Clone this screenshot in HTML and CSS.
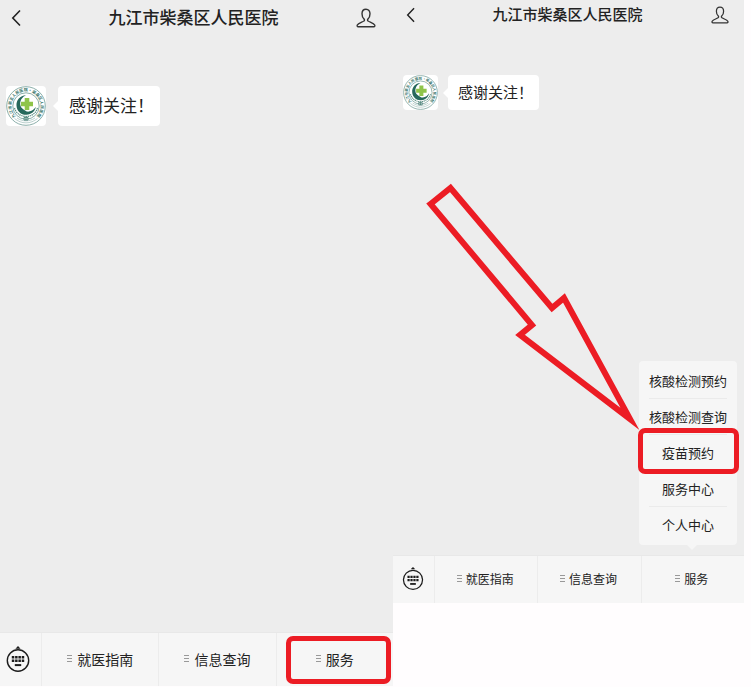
FILE: index.html
```html
<!DOCTYPE html>
<html lang="zh-CN">
<head>
    <meta charset="UTF-8">
    <meta name="viewport" content="width=device-width, initial-scale=1.0">
    <title>九江市柴桑区人民医院</title>
    <link rel="stylesheet" href="styles.css">
</head>
<body>
    <!-- Общие иконки -->
    <svg class="sprite" aria-hidden="true">
        <symbol id="icon-back" viewBox="0 0 10 18">
            <path d="M9 1.5 1.8 9 9 16.5" fill="none" stroke="#222" stroke-width="1.6"/>
        </symbol>
        <symbol id="icon-user" viewBox="0 0 20 20">
            <path d="M10 1.2C7.5 1.2 6 3.1 6 5.7c0 2.2.7 4.2 2.1 5.4.5.5.5 1.3 0 1.8-.9 1-6 2.2-6.8 4.1-.4.9-.1 1.7.9 1.7h15.6c1 0 1.3-.8.9-1.7-.8-1.9-5.9-3.1-6.8-4.1-.5-.5-.5-1.3 0-1.8C13.3 9.9 14 7.9 14 5.7c0-2.6-1.5-4.5-4-4.5z" fill="none" stroke="#333" stroke-width="1.4"/>
        </symbol>
        <symbol id="icon-keyboard" viewBox="0 0 24 28">
            <circle cx="12" cy="15.500" r="10.700" fill="none" stroke="#1c1c1c" stroke-width="1.4"/>
            <path d="M12 1.100 14.600 3.700H9.400z" fill="#1c1c1c"/>
            <path d="M5.800 12.300h12.500M5.800 15.700h12.500" stroke="#1c1c1c" stroke-width="2.500" stroke-dasharray="2.500 .8"/>
            <path d="M8.800 20.100h6.400" stroke="#1c1c1c" stroke-width="2"/>
        </symbol>
        <symbol id="icon-list" viewBox="0 0 5 7">
            <path d="M0 .5h5M0 3.500h5M0 6.500h5" stroke="#999" stroke-width="1"/>
        </symbol>
        <symbol id="logo" viewBox="0 0 40 40">
            <circle cx="20" cy="20" r="19.300" fill="#fff" stroke="#6f9a94" stroke-width=".8"/>
            <path id="ring" d="M9.700 30.300A14.600 14.600 0 1 1 30.300 30.300" fill="none"/>
            <text class="logo_text"><textPath href="#ring">九江市第五人民医院·柴桑区人民医院</textPath></text>
            <circle cx="20" cy="20" r="13.200" fill="none" stroke="#6f9a94" stroke-width=".8"/>
            <path d="M8.500 32.500c7 5.800 16 5.800 23 0M11 32c5.500 3.800 12.500 3.800 18 0" fill="none" stroke="#9dbcb7" stroke-width=".7"/>
            <path d="M20 9.200c-6 .3-9.900 4.800-9.500 10.500.4 5.500 4.600 9.300 10 9.100 4.800-.2 8.600-3.300 9.300-8-1.500 2.700-4 4.500-7 4.800-2.200.2-3-.8-4.600-1.700-2.200-1.300-3.700-2.400-4-5.300-.4-4 2-7.700 5.800-9.400z" fill="#27685c"/>
            <path d="M8.500 22c1.500 5 5.500 8.300 11.500 8.500 6-.2 10-3.500 11.500-8.500" fill="none" stroke="#5d9186" stroke-width="1.200" stroke-dasharray="1.500 .6"/>
            <path d="M18.700 12h4.600v3.700H27v4.600h-3.700V24h-4.600v-3.700H15v-4.600h3.700z" fill="#8fc44a"/>
            <path d="M18 31.500h4v2.600h-4zM20 31.500v2.600" fill="none" stroke="#27685c" stroke-width=".7"/>
        </symbol>
    </svg>

    <main class="phones">
        <section class="phone phone_large">
            <header class="header">
                <button class="icon_button" aria-label="返回"><svg class="back"><use href="#icon-back"/></svg></button>
                <h1 class="title">九江市柴桑区人民医院</h1>
                <button class="icon_button" aria-label="资料"><svg class="user"><use href="#icon-user"/></svg></button>
            </header>
            <div class="chat">
                <svg class="avatar" aria-hidden="true"><use href="#logo"/></svg>
                <p class="bubble">感谢关注！</p>
            </div>
            <nav class="toolbar">
                <button class="keyboard" aria-label="键盘"><svg class="keyboard_icon"><use href="#icon-keyboard"/></svg></button>
                <div class="tab"><button class="tab_button"><svg class="list"><use href="#icon-list"/></svg>就医指南</button></div>
                <div class="tab"><button class="tab_button"><svg class="list"><use href="#icon-list"/></svg>信息查询</button></div>
                <div class="tab marked"><button class="tab_button"><svg class="list"><use href="#icon-list"/></svg>服务</button></div>
            </nav>
        </section>

        <section class="phone phone_small">
            <header class="header">
                <button class="icon_button" aria-label="返回"><svg class="back"><use href="#icon-back"/></svg></button>
                <h1 class="title">九江市柴桑区人民医院</h1>
                <button class="icon_button" aria-label="资料"><svg class="user"><use href="#icon-user"/></svg></button>
            </header>
            <div class="chat">
                <svg class="avatar" aria-hidden="true"><use href="#logo"/></svg>
                <p class="bubble">感谢关注！</p>
            </div>
            <nav class="toolbar">
                <button class="keyboard" aria-label="键盘"><svg class="keyboard_icon"><use href="#icon-keyboard"/></svg></button>
                <div class="tab"><button class="tab_button"><svg class="list"><use href="#icon-list"/></svg>就医指南</button></div>
                <div class="tab"><button class="tab_button"><svg class="list"><use href="#icon-list"/></svg>信息查询</button></div>
                <div class="tab">
                    <button class="tab_button"><svg class="list"><use href="#icon-list"/></svg>服务</button>
                    <div class="menu">
                        <button class="menu_item">核酸检测预约</button>
                        <button class="menu_item">核酸检测查询</button>
                        <button class="menu_item selected">疫苗预约</button>
                        <button class="menu_item">服务中心</button>
                        <button class="menu_item">个人中心</button>
                        <svg class="arrow" viewBox="424 180 216 256" aria-hidden="true">
                            <path d="M430.500 204 450.500 188 552 308 564 298 630 419 520 335 532 325z"/>
                        </svg>
                    </div>
                </div>
            </nav>
        </section>
    </main>
</body>
</html>
```

FILE: styles.css
```css
* {
    box-sizing: border-box;
}

body {
    margin: 0;
    background-color: #fffdfe;
    color: #222;
    font-family: 'Noto Sans CJK SC', sans-serif;
}

button {
    margin: 0;
    padding: 0;
    border: none;
    background: none;
    color: inherit;
    font: inherit;
    cursor: pointer;
}

svg {
    display: block;
    flex-shrink: 0;
}

.sprite {
    position: absolute;
    width: 0;
    height: 0;
}

.logo_text {
    font-size: 4px;
    font-weight: 700;
    fill: #3b776d;
}

.phones {
    display: flex;
    align-items: flex-start;
    padding-right: 7px;
}

/* Экран телефона */
.phone {
    display: flex;
    flex-direction: column;
    min-width: 0;
    background-color: #ededed;
}

.phone_large {
    flex: 393 1 0;
    aspect-ratio: 393 / 686;
    font-size: 14px;
}

.phone_small {
    flex: 351 1 0;
    aspect-ratio: 351 / 603;
    font-size: 12px;
}

.header {
    display: grid;
    grid-template-columns: 1fr auto 1fr;
    align-items: center;
    height: 36px;
    padding: 0 17px 0 11px;
}

.icon_button {
    justify-self: start;
}

.icon_button:last-child {
    justify-self: end;
}

.title {
    margin: 0;
    padding-bottom: 2px;
    font-size: 17px;
    font-weight: 500;
    line-height: 24px;
}

.back {
    width: 10px;
    height: 18px;
}

.user {
    width: 20px;
    height: 20px;
}

.chat {
    display: flex;
    flex: 1;
    align-items: flex-start;
    gap: 12px;
    padding: 50px 6px 0;
}

.avatar {
    width: 40px;
    height: 40px;
    border-radius: 4px;
    background-color: #fff;
}

.bubble {
    position: relative;
    margin: 0;
    padding: 0 6px 2px 11px;
    border-radius: 4px;
    background-color: #fff;
    font-size: 17px;
    line-height: 38px;
}

/* Хвостик сообщения */
.bubble::before {
    content: '';
    position: absolute;
    top: 50%;
    right: 100%;
    transform: translateY(-50%);
    border: 5px solid transparent;
    border-right-color: #fff;
    border-left: none;
}

/* Нижняя панель */
.toolbar {
    display: flex;
    height: 54px;
    border-top: 1px solid #e8e8e8;
    background-color: #f6f6f6;
}

.keyboard {
    width: 41px;
    padding: 0 0 2px 6px;
}

.keyboard_icon {
    width: 24px;
    height: 28px;
}

.tab {
    position: relative;
    display: flex;
    flex: 1;
    border-left: 1px solid #ececec;
}

.tab_button {
    display: flex;
    flex: 1;
    justify-content: center;
    align-items: center;
    gap: 5px;
    padding-bottom: 2px;
}

.list {
    width: 5px;
    height: 7px;
}

.marked::after,
.selected::after {
    content: '';
    position: absolute;
    border: 5px solid #ec1c24;
    border-radius: 7px;
    pointer-events: none;
}

.marked::after {
    inset: 3px 2px 2px 9px;
}

/* Меньший экран */
.phone_small .header {
    height: 30px;
    padding: 0 15px 0 13px;
}

.phone_small .title,
.phone_small .bubble {
    font-size: 15px;
}

.phone_small .back {
    width: 9px;
    height: 16px;
}

.phone_small .user {
    width: 18px;
    height: 18px;
}

.phone_small .chat {
    gap: 10px;
    padding: 45px 10px 0;
}

.phone_small .avatar {
    width: 35px;
    height: 35px;
}

.phone_small .bubble {
    padding-left: 10px;
    line-height: 33px;
}

.phone_small .toolbar {
    height: 48px;
}

.phone_small .keyboard {
    padding-left: 9px;
}

.phone_small .keyboard_icon {
    width: 22px;
    height: 25px;
}

.phone_small .tab_button {
    gap: 4px;
    padding-right: 2px;
}

/* Всплывающее меню */
.menu {
    position: absolute;
    right: 7px;
    bottom: calc(100% + 11px);
    display: flex;
    flex-direction: column;
    padding: 2px 10px;
    border-radius: 4px;
    background-color: #f6f6f6;
    font-size: 13px;
    white-space: nowrap;
}

.menu::after {
    content: '';
    position: absolute;
    top: 100%;
    right: 40px;
    border: 5px solid transparent;
    border-top-color: #f6f6f6;
    border-bottom: none;
}

.menu_item {
    position: relative;
    height: 36px;
    padding-bottom: 1px;
    border-bottom: 1px solid #ebebeb;
}

.menu_item:nth-of-type(5) {
    border-bottom: none;
}

.selected::after {
    inset: -7px -12px -4px -11px;
}

.arrow {
    position: absolute;
    top: -181px;
    right: 97px;
    width: 216px;
    height: 256px;
    fill: none;
    stroke: #ec1c24;
    stroke-width: 6px;
    stroke-miterlimit: 10;
    pointer-events: none;
}
```
